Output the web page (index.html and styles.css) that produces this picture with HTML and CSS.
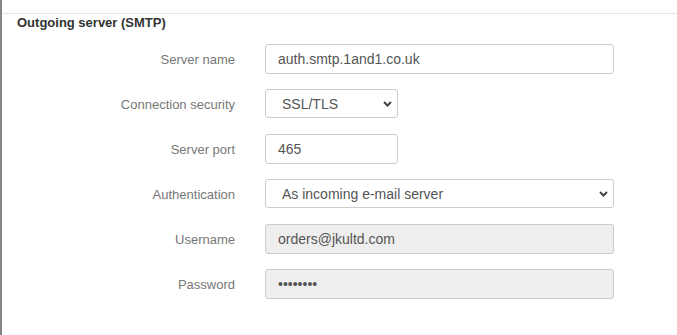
FILE: index.html
```html
<!DOCTYPE html>
<html lang="en">
<head>
<meta charset="utf-8">
<title>Outgoing server (SMTP)</title>
<link rel="stylesheet" href="styles.css">
</head>
<body>
<div class="pane">
  <div class="top-space"></div>
  <section class="section">
    <h3 class="section-title">Outgoing server (SMTP)</h3>
    <form class="form">
      <label class="label" for="sname">Server name</label>
      <input class="control wide" id="sname" type="text" value="auth.smtp.1and1.co.uk">

      <label class="label" for="sec">Connection security</label>
      <select class="control select narrow" id="sec">
        <option>SSL/TLS</option>
      </select>

      <label class="label" for="port">Server port</label>
      <input class="control narrow" id="port" type="text" value="465">

      <label class="label" for="auth">Authentication</label>
      <select class="control select wide" id="auth">
        <option>As incoming e-mail server</option>
      </select>

      <label class="label" for="user">Username</label>
      <input class="control wide" id="user" type="text" value="orders@jkultd.com" disabled>

      <label class="label" for="pass">Password</label>
      <input class="control wide" id="pass" type="password" value="12345678" disabled>
    </form>
  </section>
</div>
</body>
</html>
```
FILE: styles.css
```css
html, body {
  margin: 0;
  padding: 0;
  background: #fff;
}
body {
  font-family: "Liberation Sans", Arial, sans-serif;
  width: 677px;
  height: 335px;
  overflow: hidden;
}
.pane {
  border-left: 2px solid #858585;
  height: 335px;
  box-sizing: border-box;
}
.top-space {
  height: 13px;
}
.section {
  border-top: 1px solid #e5e5e5;
}
.section-title {
  margin: 0;
  padding-left: 15px;
  font-size: 13px;
  line-height: 18px;
  font-weight: bold;
  color: #333;
}
.form {
  margin: 12px 0 0 0;
  display: grid;
  grid-template-columns: 233px 349px;
  grid-auto-rows: 30px;
  column-gap: 30px;
  row-gap: 15px;
  align-items: center;
}
.label {
  text-align: right;
  font-size: 13px;
  color: #777;
}
.control {
  box-sizing: border-box;
  height: 30px;
  border: 1px solid #ccc;
  border-radius: 3px;
  background: #fff;
  font-family: "Liberation Sans", Arial, sans-serif;
  font-size: 14px;
  color: #555;
  padding: 0 12px;
  margin: 0;
  outline: none;
}
.control:disabled {
  background: #eee;
  color: #555;
}
.wide {
  width: 349px;
}
.narrow {
  width: 133px;
}
.select {
  appearance: none;
  -webkit-appearance: none;
  align-self: start;
  height: 29px;
  padding-left: 16px;
  background-image: url("data:image/svg+xml,%3Csvg xmlns='http://www.w3.org/2000/svg' width='9' height='6' viewBox='0 0 9 6'%3E%3Cpath d='M1 1l3.5 3.5L8 1' fill='none' stroke='%23444' stroke-width='2'/%3E%3C/svg%3E");
  background-repeat: no-repeat;
  background-position: right 5px center;
  background-size: 9px 6px;
}
```
